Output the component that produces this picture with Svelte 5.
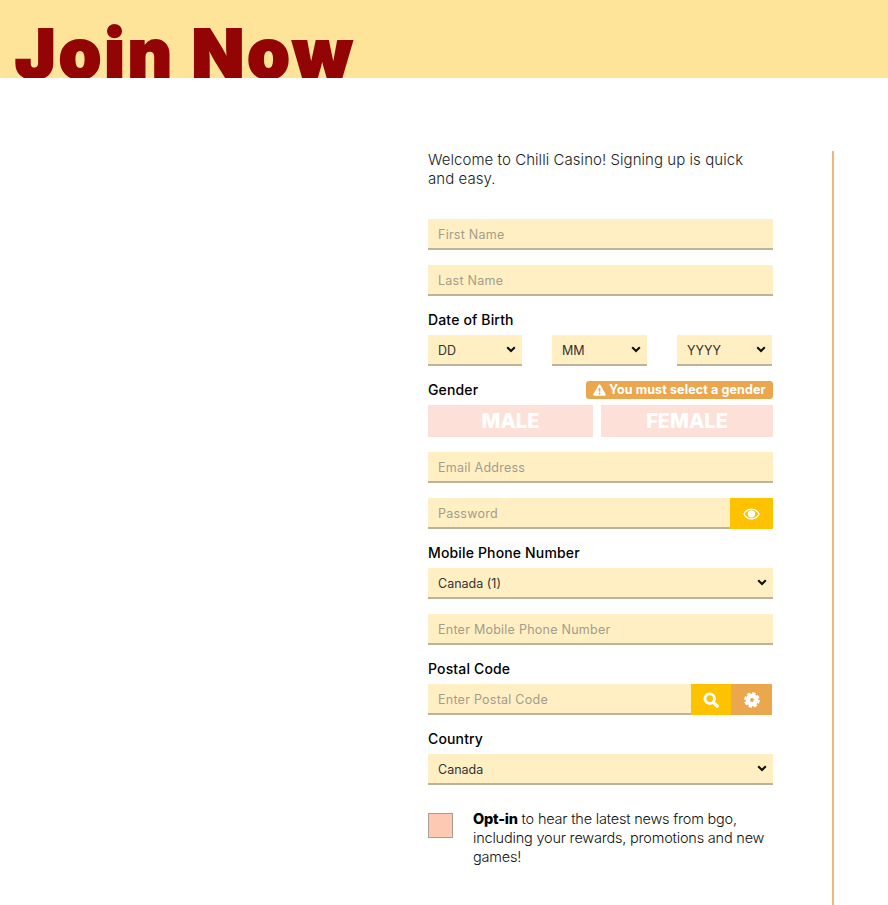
<script>
    let days = ['DD'];
    let months = ['MM'];
    let years = ['YYYY'];
</script>

<svelte:head>
    <title>Join Now</title>
</svelte:head>

<header class="banner">
    <h1>Join Now</h1>
</header>

<main class="content">
    <form class="signup">
        <p class="welcome">Welcome to Chilli Casino! Signing up is quick and easy.</p>

        <input class="field first" type="text" placeholder="First Name" />
        <input class="field gap" type="text" placeholder="Last Name" />

        <div class="label dob-label">Date of Birth</div>
        <div class="dob">
            <select class="field">{#each days as d}<option>{d}</option>{/each}</select>
            <select class="field">{#each months as m}<option>{m}</option>{/each}</select>
            <select class="field">{#each years as y}<option>{y}</option>{/each}</select>
        </div>

        <div class="gender-head">
            <span class="label">Gender</span>
            <span class="badge">
                <svg viewBox="0 0 14 13" width="13" height="12" aria-hidden="true">
                    <path fill="#fff" fill-rule="evenodd" d="M7 .4c.4 0 .7.2.9.5l5.800 10.200c.4.7-.1 1.500-.9 1.500H1.200c-.8 0-1.300-.8-.9-1.500L6.100.9C6.300.6 6.600.4 7 .4zM6 4.200l.2 4.200h1.600L8 4.200H6zm1 5.100a1 1 0 1 0 0 2 1 1 0 0 0 0-2z" />
                </svg>
                <span>You must select a gender</span>
            </span>
        </div>
        <div class="gender">
            <button type="button" class="male">MALE</button>
            <button type="button" class="female">FEMALE</button>
        </div>

        <input class="field email" type="email" placeholder="Email Address" />

        <div class="row gap">
            <input class="field" type="password" placeholder="Password" />
            <button type="button" class="addon yellow eye" aria-label="Show password">
                <svg viewBox="0 0 18 12" width="17" height="12" aria-hidden="true">
                    <path fill="none" stroke="#fff" stroke-width="1.500" d="M.9 6C2.700 2.800 5.600.8 9 .8s6.300 2 8.100 5.200c-1.800 3.200-4.700 5.200-8.100 5.200S2.700 9.200.9 6z" />
                    <circle cx="9" cy="5.800" r="3.900" fill="#fff" />
                </svg>
            </button>
        </div>

        <div class="label mobile-label">Mobile Phone Number</div>
        <select class="field"><option>Canada (1)</option></select>
        <input class="field gap" type="tel" placeholder="Enter Mobile Phone Number" />

        <div class="label postal-label">Postal Code</div>
        <div class="row postal">
            <input class="field" type="text" placeholder="Enter Postal Code" />
            <button type="button" class="addon yellow search" aria-label="Search">
                <svg viewBox="0 0 16 16" width="16" height="16" aria-hidden="true">
                    <circle cx="6.700" cy="6.700" r="4.800" fill="none" stroke="#fff" stroke-width="2.900" />
                    <path d="M10.600 10.600 14.200 14.200" stroke="#fff" stroke-width="3.400" stroke-linecap="round" />
                </svg>
            </button>
            <button type="button" class="addon orange gear" aria-label="Use my location">
                <svg viewBox="0 0 16 16" width="16" height="16" aria-hidden="true">
                    <circle cx="8" cy="8" r="6.600" fill="none" stroke="#fff" stroke-width="2.400" stroke-dasharray="3.400 1.784" />
                    <path fill="#fff" fill-rule="evenodd" d="M8 1.800a6.200 6.200 0 1 1 0 12.400A6.200 6.200 0 0 1 8 1.800zm0 4.300a1.900 1.900 0 1 0 0 3.800 1.900 1.900 0 0 0 0-3.800z" />
                </svg>
            </button>
        </div>

        <div class="label country-label">Country</div>
        <select class="field"><option>Canada</option></select>

        <label class="optin">
            <input type="checkbox" />
            <span class="optin-text"><strong>Opt-in</strong> to hear the latest news from bgo, including your rewards, promotions and new games!</span>
        </label>
    </form>
</main>

<style>
    :global(body) {
        margin: 0;
        background: #fff;
        font-family: Inter, "Open Sans", sans-serif;
        color: #000;
        height: 905px;
        overflow: hidden;
    }

    .banner {
        height: 78px;
        background: #fee499;
        overflow: hidden;
    }

    h1 {
        margin: 0;
        padding: 4px 0 0 15px;
        font-size: 68px;
        line-height: 98px;
        font-weight: 900;
        color: #930404;
        letter-spacing: 3.2px;
        white-space: nowrap;
        -webkit-text-stroke: 2px #930404;
    }

    .content {
        margin: 73px 0 0 428px;
        width: 406px;
        height: 754px;
        box-sizing: border-box;
        padding-right: 59px;
        border-right: 2px solid #edb77c;
    }

    .signup {
        display: flex;
        flex-direction: column;
    }

    .welcome {
        margin: -1px 0 0;
        padding-right: 20px;
        font-size: 15px;
        line-height: 19px;
        font-weight: 300;
        letter-spacing: 0.05px;
        color: #222;
    }

    .field {
        display: block;
        box-sizing: border-box;
        width: 100%;
        height: 31px;
        padding: 2px 0 0 10px;
        border: 0;
        border-bottom: 2px solid #bdb399;
        border-radius: 0;
        background-color: #ffefc3;
        font: 400 12.5px Inter, sans-serif;
        letter-spacing: 0.25px;
        color: #333;
        outline: none;
    }

    .field::placeholder {
        color: #a29d8d;
        opacity: 1;
    }

    select.field {
        appearance: none;
        letter-spacing: 0;
        background-image: url("data:image/svg+xml,%3Csvg xmlns='http://www.w3.org/2000/svg' viewBox='0 0 10 7'%3E%3Cpath d='M1.200 1.300 5 5.100 8.800 1.300' fill='none' stroke='%23111' stroke-width='2.100'/%3E%3C/svg%3E");
        background-repeat: no-repeat;
        background-size: 10px 7px;
        background-position: right 6px center;
    }

    .first { margin-top: 31px; }
    .gap { margin-top: 15px; }

    .label {
        font-size: 14px;
        line-height: 18px;
        font-weight: 500;
        letter-spacing: 0.15px;
    }

    .dob-label { margin-top: 15px; margin-bottom: 6px; }
    .mobile-label { margin-top: 15px; margin-bottom: 6px; }
    .postal-label { margin-top: 15px; margin-bottom: 6px; }
    .country-label { margin-top: 15px; margin-bottom: 6px; }

    .dob {
        display: grid;
        grid-template-columns: 94px 95px 95px;
        column-gap: 30px;
    }

    .gender-head {
        display: flex;
        justify-content: space-between;
        align-items: center;
        height: 18px;
        margin-top: 15px;
    }

    .badge {
        display: flex;
        align-items: center;
        gap: 3px;
        box-sizing: border-box;
        width: 187px;
        height: 18px;
        padding: 0 0 1px 7px;
        border-radius: 3px;
        background: #eaa74d;
        color: #fff;
        font-size: 12.5px;
        font-weight: 700;
        letter-spacing: 0.12px;
        white-space: nowrap;
    }

    .gender {
        display: grid;
        grid-template-columns: 165px 172px;
        column-gap: 8px;
        margin-top: 6px;
    }

    .gender button {
        height: 32px;
        padding: 0;
        border: 0;
        background: #fde1d8;
        color: #fff;
        font: 800 20px Inter, sans-serif;
    }

    .email { margin-top: 15px; }

    .row {
        display: flex;
    }

    .row .field {
        flex: 1;
        min-width: 0;
    }

    .addon {
        display: flex;
        align-items: center;
        justify-content: center;
        height: 31px;
        padding: 0;
        border: 0;
        flex: none;
    }

    .yellow { background: #fec200; }
    .orange { background: #eaa74d; }
    .eye { width: 43px; }
    .search { width: 40px; }
    .gear { width: 41px; }
    .postal { width: 344px; }

    .optin {
        display: flex;
        align-items: flex-start;
        margin-top: 25px;
    }

    .optin input {
        appearance: none;
        flex: none;
        box-sizing: border-box;
        width: 25px;
        height: 25px;
        margin: 3px 20px 0 0;
        border: 1px solid #a89f92;
        background: #fdc9b2;
    }

    .optin-text {
        margin-top: -1px;
        font-size: 14.5px;
        line-height: 19px;
        font-weight: 300;
        color: #111;
        letter-spacing: -0.2px;
    }

    .optin strong {
        font-weight: 800;
        color: #000;
    }
</style>
